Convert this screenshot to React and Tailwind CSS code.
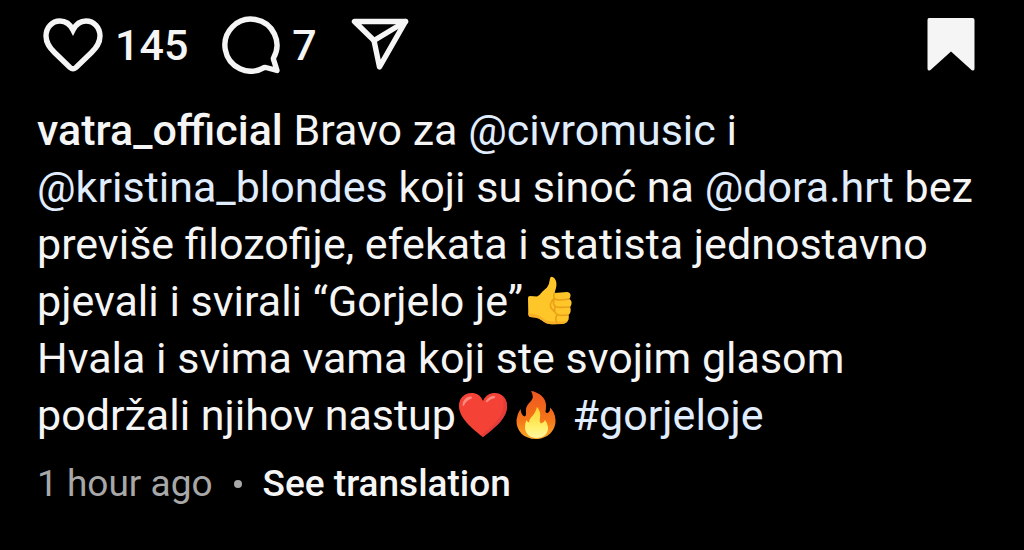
import React from 'react';

function HeartIcon() {
  return (
    <svg viewBox="0 0 60 54" className="h-[54px] w-[60px]" fill="none" stroke="currentColor" strokeWidth="5.4" aria-hidden="true">
      <path d="M30 12C27 6 22.500 3 17 3C9 3 3 9.500 3 18C3 25.500 7 30 11.500 34.500L27 49.500Q30 52 33 49.500L48.500 34.500C53 30 57 25.500 57 18C57 9.500 51 3 43 3C37.500 3 33 6 30 12Z" strokeLinejoin="miter" />
    </svg>
  );
}

function CommentIcon() {
  return (
    <svg viewBox="0 0 58 58" className="h-[58px] w-[58px]" fill="none" stroke="currentColor" strokeWidth="5.4" strokeLinejoin="round" aria-hidden="true">
      <path d="M51.500 42A26 26 0 1 0 42 51.600Q43 51.200 44 51.500L55 54.500L51.700 44Q51.200 43 51.500 42Z" />
    </svg>
  );
}

function ShareIcon() {
  return (
    <svg viewBox="0 0 58 54" className="h-[54px] w-[58px]" fill="none" stroke="currentColor" strokeWidth="5.4" strokeLinejoin="round" strokeLinecap="round" aria-hidden="true">
      <path d="M3.500 3.500H54.500L28.500 49L23 22.500Z" />
      <path d="M23 22.500L54.500 3.500" />
    </svg>
  );
}

function BookmarkIcon() {
  return (
    <svg viewBox="0 0 48 54" className="h-[54px] w-12" fill="currentColor" aria-hidden="true">
      <path d="M2 0H45.500Q47.500 0 47.500 2V50.500Q47.500 53.500 44.500 52L24 33.500L3.500 52Q.5 53.500 .5 50.500V2Q.5 0 2 0Z" />
    </svg>
  );
}

const emoji = 'inline-block h-[50px] w-[53px] align-[-10px]';

function ThumbsUp() {
  return (
    <svg viewBox="0 -1 53 50" className={emoji} role="img" aria-label="thumbs up">
      <path d="M5 21Q5 19 7 19L14 19.500Q17 18 19.500 14.500L24 10.500Q26.500 7 27 1.500Q27.500-1 30 .2C33.500 2 34 7 33 11L31.500 16L44 15Q48 15.500 47.500 19Q47.300 21 46 22Q49 23 48.500 27Q48.200 29 46.800 30Q48.500 32 47.500 35Q47 37 45.300 38Q46.500 40 45.500 42.500Q44 46.500 39 47L29 47.300Q23 47 19 43.500Q16 41 12 40.500L7 40Q5.500 39.500 5.300 37Z" fill="#ffc629" />
      <path d="M5.300 36Q12 37 17 39Q22 44 29 44.500H41Q44.500 44 45.500 41.500Q44.500 46.500 39 47L29 47.300Q23 47 19 43.500Q16 41 12 40.500L7 40Q5.500 39.500 5.300 37Z" fill="#f7b025" />
      <path d="M31.500 16Q30 19 31.500 21.500Q33 24 46 22M31.500 22Q29 27 32.500 29.500Q36 31 46.800 30M32 30Q30.500 35 34 37.500Q38 39 45.300 38M34 38Q31.500 42 34 45.500M30.500 22Q24 29 31 34" fill="none" stroke="#eba019" strokeWidth="1.6" strokeLinecap="round" />
    </svg>
  );
}

function RedHeart() {
  return (
    <svg viewBox="0 0 53 50" className={emoji} role="img" aria-label="red heart">
      <path d="M27 11C24.500 5 20.500 3 15.500 3C8 3 3 8.500 3 16C3 28 16 38.500 27 47C39 37.500 51 28.500 51 16C51 8.500 46 3 39 3C33.500 3 29.500 5.500 27 11Z" fill="#f44336" />
      <path d="M46.500 6C50.500 22 43 32 25 45.500L27 47C39 37.500 51 28.500 51 16C51 11.500 49 8 46.500 6Z" fill="#e23b3a" />
      <path d="M6.500 15Q7 8 14 6.500Q17 6 15.500 8.500Q10 10.500 8.300 15Q7 17 6.500 15ZM30 11Q33 6 38 6Q40.500 6.500 38.500 8Q34 9 31.500 12Q29.500 13 30 11Z" fill="#ff8a80" />
    </svg>
  );
}

function Fire() {
  return (
    <svg viewBox="0 0 53 50" className={emoji} role="img" aria-label="fire">
      <defs>
        <linearGradient id="flame" x1="0" y1="0" x2="0" y2="1">
          <stop offset="0" stopColor="#ee5521" />
          <stop offset=".6" stopColor="#f57518" />
          <stop offset="1" stopColor="#fba827" />
        </linearGradient>
        <linearGradient id="flame-core" x1="0" y1="0" x2="0" y2="1">
          <stop offset="0" stopColor="#ffd12e" />
          <stop offset=".65" stopColor="#fff06b" />
          <stop offset="1" stopColor="#fff4a4" />
        </linearGradient>
      </defs>
      <path d="M22 1C30 2 37 8 37 15Q37 19 36.500 22Q38 24 40 22Q41.500 20.500 41 17.500Q46 22 46.500 30C47 41 38 49 27 49C15 49 7 41 7.500 30Q8 24 11.500 19Q12 25 15.500 26.500Q17.500 26 17 22C16.500 17 19 14 22 11Q25.500 7 22 1Z" fill="url(#flame)" />
      <path d="M28 17Q26.500 23 22 27.500Q20 30 20 32.500Q18.500 32 17.500 30Q15.500 34 16 38C16.500 44 21 48 27.500 48C35 48 39.500 43.500 39 37Q38.500 33 36 30Q35 33 32 33.500Q30 32 31 28Q32 21 28 17Z" fill="url(#flame-core)" />
    </svg>
  );
}

function Tag({ children }) {
  return <a href="#profile" className="text-[#e0edff]">{children}</a>;
}

export default function App() {
  return (
    <div className="min-h-screen bg-black px-[37px] pt-4 pb-10 font-['Roboto',sans-serif] text-[#f5f5f5]">
      <div className="flex h-[58px] items-center justify-between pl-1.5 pr-3">
        <div className="flex items-center text-[43px] leading-[58px] font-medium">
          <button type="button" aria-label="Like" className="flex items-center gap-3">
            <HeartIcon />
            <span>145</span>
          </button>
          <button type="button" aria-label="Comment" className="ml-[34px] flex items-center gap-3">
            <CommentIcon />
            <span>7</span>
          </button>
          <button type="button" aria-label="Share" className="ml-[34px]">
            <ShareIcon />
          </button>
        </div>
        <button type="button" aria-label="Saved">
          <BookmarkIcon />
        </button>
      </div>

      <p className="mt-7 text-[43px] leading-[57px]">
        <a href="#profile" className="font-medium">vatra_official</a> Bravo za <Tag>@civromusic</Tag> i <br />
        <Tag>@kristina_blondes</Tag> koji su sinoć na <Tag>@dora.hrt</Tag> bez<br />
        previše filozofije, efekata i statista jednostavno<br />
        pjevali i svirali “Gorjelo je”<ThumbsUp /><br />
        Hvala i svima vama koji ste svojim glasom<br />
        podržali njihov nastup<RedHeart /><Fire /> <Tag>#gorjeloje</Tag>
      </p>

      <div className="mt-4 flex items-center text-[37px] leading-[48px]">
        <span className="text-[#a8a8a8]">1 hour ago</span>
        <span className="mx-[21px] size-2 rounded-full bg-[#a8a8a8]" />
        <button type="button" className="font-medium">See translation</button>
      </div>
    </div>
  );
}
